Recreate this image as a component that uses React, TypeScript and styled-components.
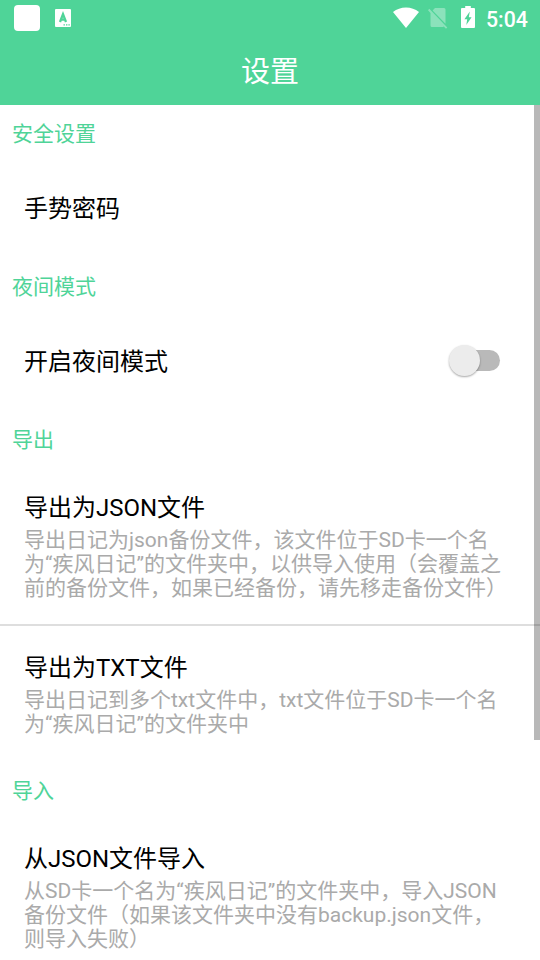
import React from "react";
import styled, { createGlobalStyle } from "styled-components";

const GREEN = "#4fd498";

const GlobalStyle = createGlobalStyle`
  body {
    margin: 0;
    background: #fff;
    font-family: Roboto, "Noto Sans CJK SC", sans-serif;
  }
`;

const Screen = styled.div`
  display: flex;
  flex-direction: column;
  width: 540px;
  height: 960px;
  overflow: hidden;
  background: #fff;
`;

const Header = styled.header`
  flex: none;
  height: 105px;
  background: ${GREEN};
  color: #fff;
`;

const StatusBar = styled.div`
  display: flex;
  align-items: center;
  justify-content: space-between;
  height: 36px;
  padding: 0 12px 0 14px;
`;

const StatusGroup = styled.div<{ $gap: number }>`
  display: flex;
  align-items: center;
  gap: ${(p) => p.$gap}px;
`;

const SystemIcons = styled.div`
  display: flex;
  align-items: flex-start;
  height: 22px;
  margin-top: -2px;

  svg:nth-child(1) {
    margin: 1px 9px 0 0;
  }
  svg:nth-child(2) {
    margin: 2px 13px 0 0;
  }
`;

const AppBadge = styled.span`
  width: 26px;
  height: 26px;
  border-radius: 4px;
  background: #fff;
`;

const Clock = styled.span`
  width: 42px;
  height: 36px;
  font-size: 21.3px;
  font-weight: 500;
  line-height: 39px;
  white-space: nowrap;
`;

const PageTitle = styled.h1`
  margin: 0;
  padding-top: 3px;
  font-size: 29px;
  font-weight: 400;
  line-height: 67px;
  text-align: center;
`;

const Body = styled.main`
  position: relative;
  flex: 1;
  min-height: 0;
  overflow: hidden;
`;

const ScrollThumb = styled.div`
  position: absolute;
  top: 0;
  right: 0;
  width: 6px;
  height: 635px;
  background: rgba(0, 0, 0, 0.28);
`;

const SectionTitle = styled.h2`
  margin: 0;
  padding-left: 12px;
  height: 56px;
  line-height: 58px;
  font-size: 21px;
  font-weight: 400;
  color: ${GREEN};
`;

const Row = styled.div`
  display: flex;
  align-items: center;
  justify-content: space-between;
  box-sizing: border-box;
  height: 97px;
  padding: 0 40px 2px 24px;
`;

const Entry = styled.div<{ $divided?: boolean }>`
  padding: 27px 24px ${(p) => (p.$divided ? 24 : 26)}px;
  border-bottom: ${(p) => (p.$divided ? "2px solid #dedede" : "none")};

  & + & {
    padding-top: 28px;
  }
`;

const Label = styled.div`
  font-size: 24px;
  line-height: 28px;
  color: #000;
`;

const Summary = styled.div`
  margin-top: 6px;
  font-size: 21px;
  line-height: 24px;
  color: #aaa;
`;

const Line = styled.div`
  white-space: nowrap;
`;

const Track = styled.div`
  display: flex;
  align-items: center;
  width: 48px;
  height: 21px;
  margin-bottom: 3px;
  border-radius: 11px;
  background: #b9b9b9;
`;

const Knob = styled.div`
  flex: none;
  width: 31px;
  height: 31px;
  margin-left: -3px;
  border-radius: 50%;
  background: #ececec;
  box-shadow: 0 1px 2px rgba(0, 0, 0, 0.35);
`;

const KeyboardIcon = () => (
  <svg width="16" height="18" viewBox="0 0 16 18">
    <rect width="16" height="18" rx="1" fill="#fff" />
    <path d="M5 13 8 5.200l3 7.800M6 10.700h4" fill="none" stroke={GREEN} strokeWidth="2.3" />
    <path d="M8.5 15.8h1.4M11 15.8h1.4M13.4 15.8h1.4" stroke={GREEN} strokeWidth="1.3" />
  </svg>
);

const WifiIcon = () => (
  <svg width="26" height="21" viewBox="0 0 26 21">
    <path d="M13 21 0 5C3.8 2 8 .4 13 .4S22.2 2 26 5z" fill="#fff" />
  </svg>
);

const NoSimIcon = () => (
  <svg width="20" height="21" viewBox="0 0 20 21">
    <g fill="#fff" opacity="0.34">
      <path d="M7 0H16a1.5 1.5 0 0 1 1.5 1.5v14.3L4.6 2.4z" />
      <path d="M1.3.8 19.3 19.5 18 20.8 15.8 18.6Q15.4 19 14.8 19H4A1.5 1.5 0 0 1 2.5 17.5V5L0 2.2z" />
    </g>
  </svg>
);

const BatteryIcon = () => (
  <svg width="14" height="22" viewBox="0 0 14 22">
    <path d="M4.2 0h5.6v2H13a1 1 0 0 1 1 1v18a1 1 0 0 1-1 1H1a1 1 0 0 1-1-1V3a1 1 0 0 1 1-1h3.2z" fill="#fff" />
    <path d="M8.8 5.6 3.4 13.2H6.2L5.300 19 10.600 11.300H7.800z" fill={GREEN} />
  </svg>
);

type EntryProps = { label: string; lines: string[]; divided?: boolean };

const SettingsEntry = ({ label, lines, divided }: EntryProps) => (
  <Entry $divided={divided}>
    <Label>{label}</Label>
    <Summary>
      {lines.map((line) => (
        <Line key={line}>{line}</Line>
      ))}
    </Summary>
  </Entry>
);

export default function App() {
  return (
    <>
      <GlobalStyle />
      <Screen>
        <Header>
          <StatusBar>
            <StatusGroup $gap={15}>
              <AppBadge />
              <KeyboardIcon />
            </StatusGroup>
            <StatusGroup $gap={11}>
              <SystemIcons>
                <WifiIcon />
                <NoSimIcon />
                <BatteryIcon />
              </SystemIcons>
              <Clock>5:04</Clock>
            </StatusGroup>
          </StatusBar>
          <PageTitle>设置</PageTitle>
        </Header>
        <Body>
          <SectionTitle>安全设置</SectionTitle>
          <Row>
            <Label>手势密码</Label>
          </Row>
          <SectionTitle>夜间模式</SectionTitle>
          <Row>
            <Label>开启夜间模式</Label>
            <Track role="switch" aria-checked={false}>
              <Knob />
            </Track>
          </Row>
          <SectionTitle>导出</SectionTitle>
          <SettingsEntry
            divided
            label="导出为JSON文件"
            lines={[
              "导出日记为json备份文件，该文件位于SD卡一个名",
              "为“疾风日记”的文件夹中，以供导入使用（会覆盖之",
              "前的备份文件，如果已经备份，请先移走备份文件）",
            ]}
          />
          <SettingsEntry
            label="导出为TXT文件"
            lines={["导出日记到多个txt文件中，txt文件位于SD卡一个名", "为“疾风日记”的文件夹中"]}
          />
          <SectionTitle>导入</SectionTitle>
          <SettingsEntry
            label="从JSON文件导入"
            lines={[
              "从SD卡一个名为“疾风日记”的文件夹中，导入JSON",
              "备份文件（如果该文件夹中没有backup.json文件，",
              "则导入失败）",
            ]}
          />
          <ScrollThumb />
        </Body>
      </Screen>
    </>
  );
}
